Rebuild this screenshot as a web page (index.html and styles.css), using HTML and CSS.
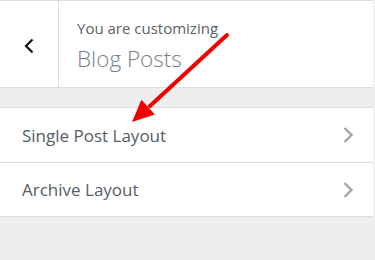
FILE: index.html
```html
<!DOCTYPE html>
<html>
<head>
<meta charset="utf-8">
<link rel="stylesheet" href="styles.css">
</head>
<body>
<div class="panel">
  <header class="head">
    <button class="back" aria-label="Back">
      <svg width="12" height="16" viewBox="0 0 12 16"><path d="M9.5 1.5 L3 8 L9.5 14.5" fill="none" stroke="#111" stroke-width="2.2"/></svg>
    </button>
    <div class="info">
      <span class="action">You are customizing</span>
      <h3 class="title">Blog Posts</h3>
    </div>
  </header>
  <ul class="sections">
    <li class="item">
      <span class="label">Single Post Layout</span>
      <svg class="chev" width="12" height="16" viewBox="0 0 12 16"><path d="M2.5 1 L9.5 8 L2.5 15" fill="none" stroke="#a0a5aa" stroke-width="2.4"/></svg>
    </li>
    <li class="item">
      <span class="label">Archive Layout</span>
      <svg class="chev" width="12" height="16" viewBox="0 0 12 16"><path d="M2.5 1 L9.5 8 L2.5 15" fill="none" stroke="#a0a5aa" stroke-width="2.4"/></svg>
    </li>
  </ul>
</div>
<svg class="arrow" width="375" height="260" viewBox="0 0 375 260">
  <line x1="227" y1="35" x2="150" y2="106" stroke="#f20000" stroke-width="4" stroke-linecap="round"/>
  <polygon points="132,122 141.4,99.8 154.9,114.6" fill="#f20000"/>
</svg>
</body>
</html>
```
FILE: styles.css
```css
html, body {
  margin: 0;
  padding: 0;
  background: #eeeeee;
  font-family: "Open Sans", "Noto Sans", sans-serif;
}
body {
  width: 375px;
  height: 260px;
  overflow: hidden;
  position: relative;
}
.panel {
  width: 373px;
}
.head {
  display: flex;
  height: 86px;
  background: #fff;
  border-top: 1px solid #dddddd;
  border-bottom: 1px solid #dddddd;
}
.back {
  width: 59px;
  border: 0;
  border-right: 1px solid #dddddd;
  background: #fff;
  padding: 3px 0 0;
  display: flex;
  align-items: center;
  justify-content: center;
}
.info {
  display: flex;
  flex-direction: column;
  padding: 17px 0 0 18px;
}
.action {
  font-size: 15px;
  line-height: 20px;
  color: #5a6168;
}
.title {
  margin: 7px 0 0;
  font-size: 22.5px;
  line-height: 28px;
  font-weight: 300;
  color: #7a8087;
}
.sections {
  list-style: none;
  margin: 19px 0 0;
  padding: 0;
  background: #fff;
  border-top: 1px solid #dddddd;
}
.item {
  display: flex;
  align-items: center;
  justify-content: space-between;
  height: 54px;
  padding: 0 19px 0 22px;
  border-bottom: 1px solid #dddddd;
}
.item + .item {
  height: 53px;
}
.label {
  font-size: 17px;
  color: #555d66;
  font-weight: 500;
}
.arrow {
  position: absolute;
  left: 0;
  top: 0;
  pointer-events: none;
}
```
